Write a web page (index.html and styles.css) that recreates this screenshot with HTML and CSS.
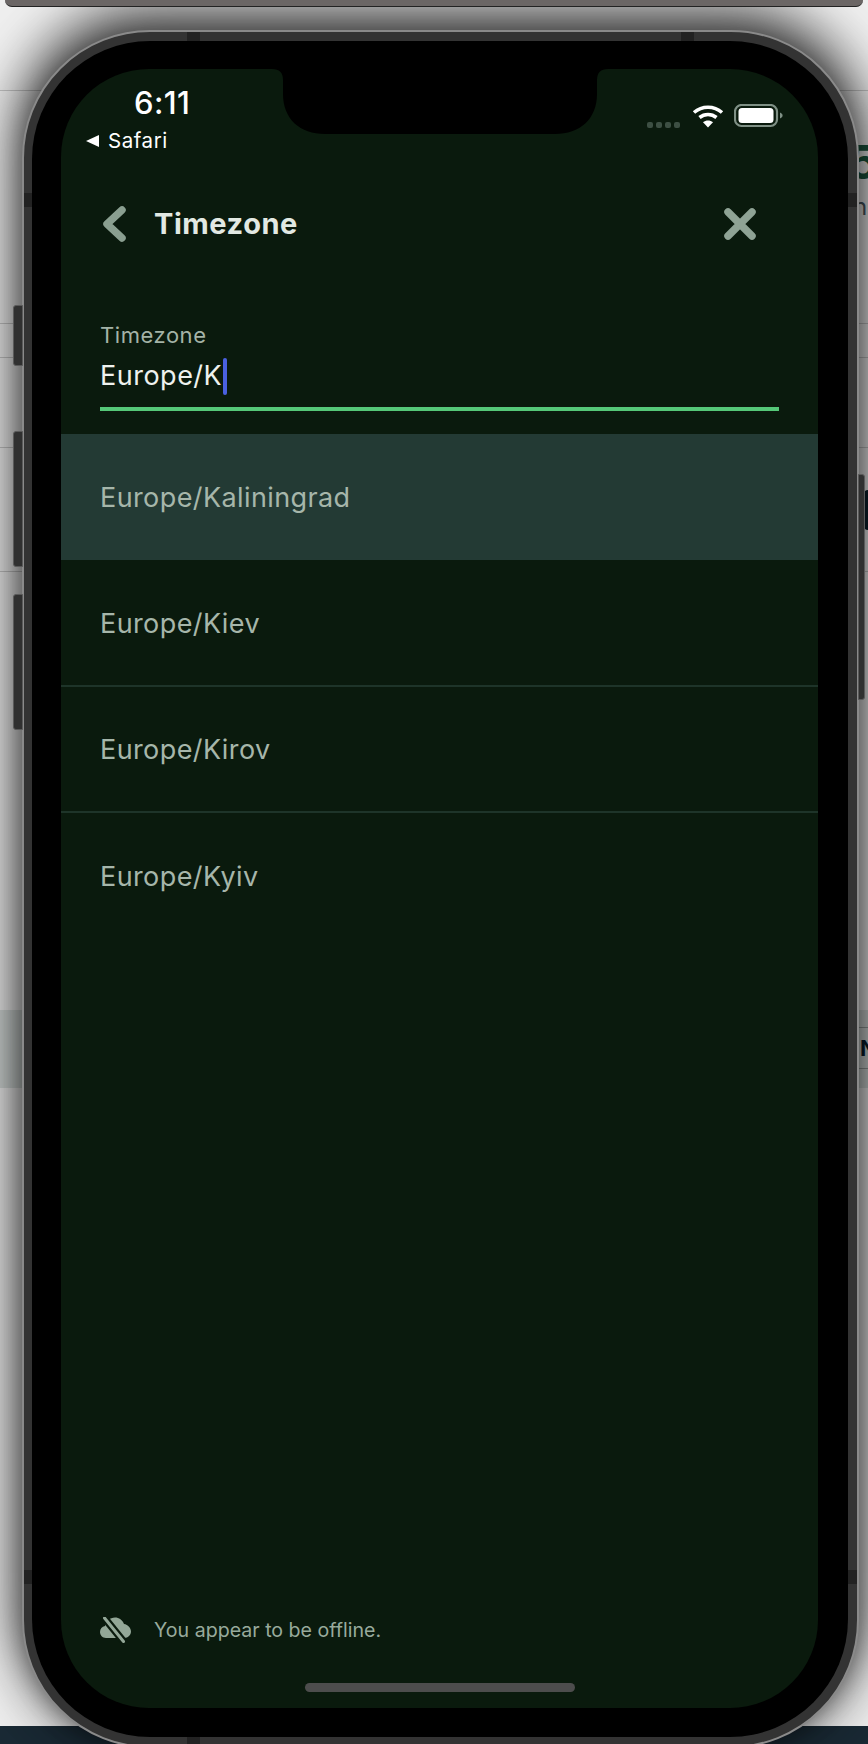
FILE: index.html
```html
<!DOCTYPE html>
<html lang="en">
<head>
<meta charset="utf-8">
<title>Timezone</title>
<link rel="stylesheet" href="styles.css">
</head>
<body>
<div class="page-behind">
  <span class="rule rule-a"></span>
  <span class="rule rule-b"></span>
  <span class="rule rule-c"></span>
  <span class="rule rule-d"></span>
  <span class="rule rule-e"></span>
  <span class="rule rule-f"></span>
  <span class="rule rule-g"></span>
  <span class="band"></span>
  <span class="peek peek-logo">5</span>
  <span class="peek peek-sub">n</span>
  <span class="peek peek-n">N</span>
  <span class="peek-block"></span>
</div>
<div class="topbar"></div>
<div class="phone">
  <span class="btn btn-mute"></span>
  <span class="btn btn-up"></span>
  <span class="btn btn-down"></span>
  <span class="btn btn-power"></span>
  <span class="seam seam-t1"></span>
  <span class="seam seam-t2"></span>
  <span class="seam seam-l1"></span>
  <span class="seam seam-r1"></span>
  <span class="seam seam-l2"></span>
  <span class="seam seam-r2"></span>
  <span class="seam seam-b1"></span>
  <div class="bezel">
    <main class="screen">
      <svg class="notch" width="336" height="65" viewBox="0 0 336 65"><path d="M0 0Q11 0 11 11V25C11 50 28 65 53 65H283C308 65 325 50 325 25V11Q325 0 336 0Z" fill="#000"/></svg>
      <div class="status">
        <div class="status-left">
          <div class="time">6:11</div>
          <div class="back-app"><span class="back-tri"></span>Safari</div>
        </div>
        <div class="status-right">
          <div class="dots"><i></i><i></i><i></i><i></i></div>
          <svg class="wifi" width="32" height="24" viewBox="0 0 32 24" fill="none" stroke="#fff" stroke-width="3.6">
            <path d="M2 8.5C10 1.5 22 1.5 30 8.5"/>
            <path d="M7.5 13.5C12.5 9.5 19.5 9.5 24.5 13.5"/>
            <path d="M16 23.5L11 18.2C14 15.8 18 15.8 21 18.2Z" fill="#fff" stroke="none"/>
          </svg>
          <svg class="battery" width="49" height="24" viewBox="0 0 49 24">
            <rect x="1" y="1" width="42" height="21" rx="6.5" fill="none" stroke="#7f9085" stroke-width="2.2"/>
            <rect x="4.5" y="4" width="35" height="15" rx="3.5" fill="#fff"/>
            <path d="M46 8.5C48 9.3 48.6 10.4 48.6 11.5S48 13.7 46 14.5Z" fill="#7f9085"/>
          </svg>
        </div>
      </div>
      <header class="header">
        <div class="header-left">
          <svg class="chev" width="24" height="36" viewBox="0 0 24 36" fill="none" stroke="#8a9f90" stroke-width="7.5" stroke-linecap="round" stroke-linejoin="round"><path d="M20 4L5 18L20 32"/></svg>
          <h1 class="title">Timezone</h1>
        </div>
        <svg class="close" width="34" height="34" viewBox="0 0 34 34" fill="none" stroke="#8fa395" stroke-width="7.5" stroke-linecap="round"><path d="M5 5L29 29M29 5L5 29"/></svg>
      </header>
      <div class="field">
        <label class="field-label">Timezone</label>
        <div class="field-value">Europe/K<span class="caret"></span></div>
      </div>
      <ul class="list">
        <li class="item item-active">Europe/Kaliningrad</li>
        <li class="item">Europe/Kiev</li>
        <li class="item">Europe/Kirov</li>
        <li class="item item-last">Europe/Kyiv</li>
      </ul>
      <footer class="offline">
        <svg class="cloud" width="32" height="26" viewBox="0 0 32 26">
          <path d="M6 21C2.5 21 0 18 0 15C0 12 2 9.5 5 9C6 4 10 .5 15 .5C19 .5 22.5 3 24 7C28 7.5 31 11 31 14.5C31 18 28 21 24.5 21Z" fill="#93a797"/>
          <path d="M0 -4.5L28 30" stroke="#0a1a0d" stroke-width="7.5"/>
          <path d="M4.5 1L23.5 24.5" stroke="#93a797" stroke-width="3" stroke-linecap="round"/>
        </svg>
        <span class="offline-text">You appear to be offline.</span>
      </footer>
      <div class="home-bar"></div>
    </main>
  </div>
</div>
</body>
</html>
```
FILE: styles.css
```css
* { box-sizing: border-box; }
html, body { margin: 0; padding: 0; }
body {
  position: relative;
  width: 868px;
  height: 1744px;
  overflow: hidden;
  font-family: Inter, "Liberation Sans", sans-serif;
  background: linear-gradient(to bottom, #efefef 0, #efefef 1726px, #1a2a35 1726px);
}
.page-behind { position: absolute; inset: 0; }
.rule { position: absolute; left: 0; width: 100%; height: 1px; background: #c4c4c4; }
.rule-a { top: 90px; }
.rule-b { top: 323px; }
.rule-c { top: 357px; }
.rule-d { top: 447px; }
.rule-e { top: 571px; }
.rule-f { top: 1027px; left: 850px; width: 18px; background: #8d8d8d; }
.rule-g { top: 1068px; left: 850px; width: 18px; background: #8d8d8d; }
.band { position: absolute; left: 0; top: 1010px; width: 100%; height: 78px; background: rgba(170, 185, 180, .4); }
.peek { position: absolute; font-weight: 700; }
.peek-logo { left: 848px; top: 134px; font-size: 46px; line-height: 56px; color: #1d5a42; }
.peek-sub { left: 853px; top: 192px; font-size: 24px; line-height: 30px; font-weight: 400; color: #4b5a63; }
.peek-n { left: 860px; top: 1035px; font-size: 22px; line-height: 26px; color: #0a1e2c; }
.peek-block { position: absolute; left: 864px; top: 490px; width: 8px; height: 40px; border-radius: 5px; background: #0d1f2b; }

.topbar {
  position: relative;
  z-index: 1;
  height: 7px;
  margin: 0 5px;
  background: #6b6665;
  border-bottom: 1px solid #222;
  border-radius: 0 0 7px 7px;
}

.phone {
  position: relative;
  width: 837px;
  margin: 23px 0 0 22px;
  padding: 9px 9px 9px 8px;
  background: #333;
  border: 2px solid #8a8a8a;
  border-radius: 128px;
  box-shadow: 0 -22px 50px 4px rgba(0, 0, 0, .5), 0 0 60px 6px rgba(0, 0, 0, .38), 0 0 22px rgba(0, 0, 0, .3);
}
.btn { position: absolute; background: #303030; border: 1px solid #5a5a5a; }
.btn-mute { left: -11px; top: 273px; width: 10px; height: 61px; border-radius: 3px 0 0 3px; }
.btn-up { left: -11px; top: 399px; width: 10px; height: 136px; border-radius: 3px 0 0 3px; }
.btn-down { left: -11px; top: 562px; width: 10px; height: 136px; border-radius: 3px 0 0 3px; }
.btn-power { right: -8px; top: 442px; width: 7px; height: 226px; border-radius: 0 3px 3px 0; }
.seam { position: absolute; background: #222; }
.seam-t1 { left: 163px; top: 0; width: 13px; height: 9px; }
.seam-t2 { left: 657px; top: 0; width: 13px; height: 9px; }
.seam-l1 { left: 0; top: 161px; width: 8px; height: 14px; }
.seam-r1 { right: 0; top: 161px; width: 9px; height: 14px; }
.seam-l2 { left: 0; top: 1538px; width: 8px; height: 14px; }
.seam-r2 { right: 0; top: 1538px; width: 9px; height: 14px; }
.seam-b1 { left: 163px; bottom: 0; width: 13px; height: 9px; }

.bezel {
  padding: 28px 30px 29px 29px;
  background: #000;
  border-radius: 118px;
}
.screen {
  position: relative;
  display: flex;
  flex-direction: column;
  height: 1639px;
  background: #0a1a0d;
  border-radius: 88px;
  overflow: hidden;
}
.notch { position: absolute; left: 211px; top: 0; }

.status {
  display: flex;
  justify-content: space-between;
  height: 100px;
  padding: 16px 40px 0 25px;
  color: #fff;
}
.time { margin-left: 48px; font-size: 31px; line-height: 36px; font-weight: 500; letter-spacing: .4px; }
.back-app { display: flex; align-items: center; gap: 9px; margin-top: 6px; font-size: 20.5px; line-height: 28px; letter-spacing: .55px; }
.back-tri { width: 0; height: 0; border-style: solid; border-width: 6.5px 13px 6.5px 0; border-color: transparent #fff transparent transparent; }
.status-right { display: flex; align-items: flex-start; margin-top: 20px; }
.dots { display: flex; gap: 3px; margin-top: 17px; margin-right: 12px; }
.dots i { width: 6px; height: 6px; border-radius: 2px; background: #3d4f43; }
.wifi { margin-right: 10px; margin-top: -1px; }
.battery { margin-top: -1px; margin-right: -5px; }

.header {
  display: flex;
  align-items: center;
  justify-content: space-between;
  height: 110px;
  padding: 0 61px 0 39px;
}
.header-left { display: flex; align-items: center; gap: 28px; }
.chev { display: block; margin-left: 2px; }
.title { margin: 0; font-size: 29px; line-height: 36px; font-weight: 700; letter-spacing: .55px; color: #e2e9e3; }
.close { display: block; }

.field {
  height: 132px;
  margin: 0 39px 23px;
  padding-top: 42px;
  border-bottom: 4px solid #55c878;
}
.field-label { display: block; font-size: 22px; line-height: 28px; letter-spacing: .55px; color: #a4b3a7; }
.field-value { display: flex; align-items: center; margin-top: 7px; height: 40px; font-size: 27px; line-height: 40px; letter-spacing: .5px; color: #eef2ee; }
.caret { width: 4px; height: 37px; margin-left: 1px; border-radius: 2px; background: #4a60e0; }

.list { margin: 0; padding: 0; list-style: none; }
.item {
  display: flex;
  align-items: center;
  height: 126.5px;
  padding: 2px 39px 0;
  font-size: 27px;
  letter-spacing: .4px;
  color: #a6b6aa;
  border-bottom: 2px solid #1e3429;
}
.item-active { height: 126px; padding-top: 0; background: #233a34; border-bottom: 0; }
.item-last { padding-top: 0; border-bottom: 0; }

.offline {
  display: flex;
  align-items: center;
  gap: 22px;
  margin-top: auto;
  padding: 0 39px;
}
.cloud { display: block; }
.offline-text { font-size: 19.6px; line-height: 26px; color: #98aa9c; }
.home-bar {
  width: 270px;
  height: 9px;
  margin: 40px auto 16px;
  border-radius: 5px;
  background: #4d4d4d;
}
```
